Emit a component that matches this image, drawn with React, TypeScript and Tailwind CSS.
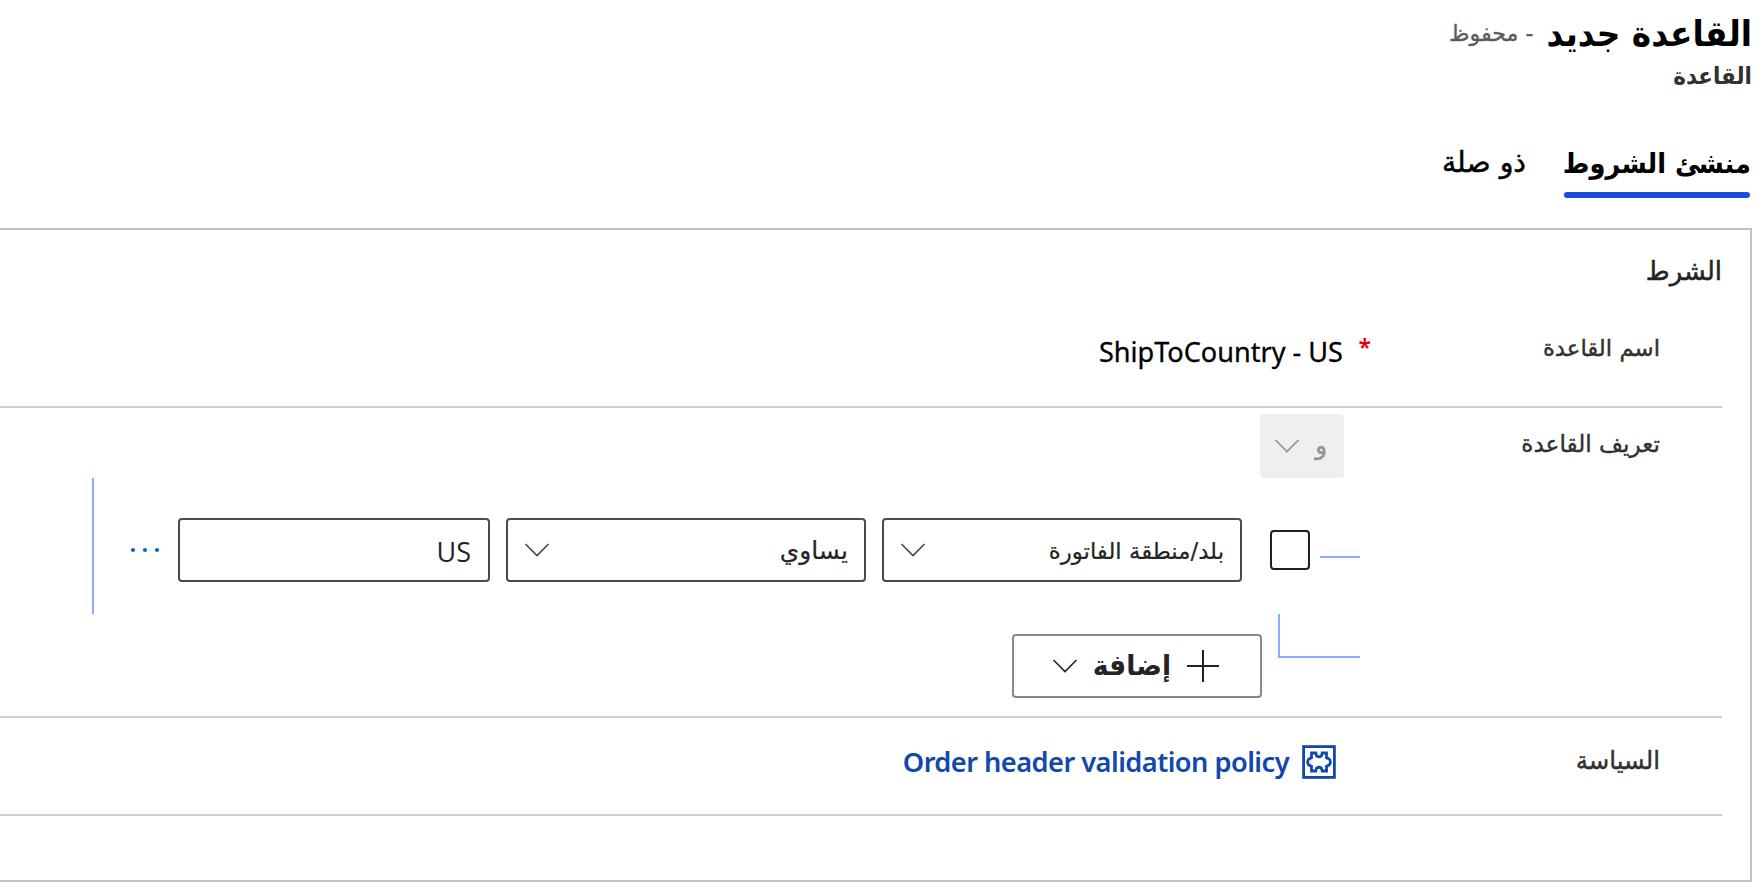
import type { ReactNode } from "react";

function Chevron({ className }: { className: string }) {
  return (
    <svg width="26" height="16" viewBox="0 0 26 16" fill="none" stroke="currentColor" className={className}>
      <path d="M1.5 2 L13 13.5 L24.5 2" strokeWidth="1.6" />
    </svg>
  );
}

function PuzzleIcon() {
  return (
    <svg width="34" height="34" viewBox="0 0 34 34" fill="none" stroke="#1148ab">
      <rect x="1.6" y="1.6" width="30.8" height="30.8" strokeWidth="2.8" />
      <path
        d="M9.5 8 H13.8 L14.6 10.8 Q17 12.6 19.4 10.8 L20.2 8 H24.5 V12.8 L26.6 13.6 Q28.4 14.6 28.4 17 Q28.4 19.4 26.6 20.4 L24.5 21.2 V26 H20.2 L19.4 23.2 Q17 21.4 14.6 23.2 L13.8 26 H9.5 V21.2 L7.4 20.4 Q5.6 19.4 5.6 17 Q5.6 14.6 7.4 13.6 L9.5 12.8 Z"
        strokeWidth="2.8"
      />
    </svg>
  );
}

function Select({ children }: { children: ReactNode }) {
  return (
    <button className="flex h-16 w-[360px] items-center justify-between rounded border-2 border-[#4f4a47] pt-[2px] pr-[16px] pl-[16px] text-[#242424]">
      {children}
      <Chevron className="-mt-[2px] text-[#4a4644]" />
    </button>
  );
}

export default function App() {
  return (
    <div
      dir="rtl"
      className="h-[892px] w-[1764px] overflow-hidden bg-white font-['DejaVu_Sans','Noto_Sans',sans-serif] whitespace-nowrap text-[#323130]"
    >
      <header className="pr-[14px]">
        <div className="flex h-[69px] items-center">
          <h1 className="-mr-[2px] scale-y-[1.08] text-[32.8px] leading-[69px] font-bold text-black">القاعدة جديد</h1>
          <span className="mr-[13px] -mt-[3px] text-[22.2px] leading-[60px] text-[#5c5b5a] [-webkit-text-stroke:0.3px]">- محفوظ</span>
        </div>
        <div className="-mr-[2px] -translate-y-[2px] scale-y-[1.1] text-[21.5px] leading-[17px] font-bold">القاعدة</div>
        <nav className="mt-12 flex text-black">
          <div className="w-[186px]">
            <div className="-mr-[1px] scale-y-[1.08] text-[25.7px] leading-[58px] font-bold">منشئ الشروط</div>
            <div className="h-[6px] rounded-[3px] bg-[#1b4bdb]" />
          </div>
          <div className="mr-[38px] text-[28.4px] leading-[58px] [-webkit-text-stroke:0.5px]">ذو صلة</div>
        </nav>
      </header>

      <section className="mt-[30px] mr-3 h-[654px] border-2 border-l-0 border-[#c2c2c2] pr-7">
        <h2 className="h-[82px] text-[25.8px] leading-[82px] text-[#242424] [-webkit-text-stroke:0.5px]">الشرط</h2>

        <div className="flex h-24 border-b-2 border-[#cfcfcf]">
          <div className="w-[352px] pr-[62px] text-[22.8px] leading-[72px] [-webkit-text-stroke:0.4px]">اسم القاعدة</div>
          <div className="-mr-px w-[28px] pt-[20px] font-['Noto_Sans',sans-serif] text-[23px] leading-[30px] font-semibold text-[#e60000]">*</div>
          <div dir="ltr" className="font-['Noto_Sans',sans-serif] text-[27.1px] leading-[80px] text-black [-webkit-text-stroke:0.3px]">
            ShipToCountry - US
          </div>
        </div>

        <div className="flex h-[310px] border-b-2 border-[#cfcfcf]">
          <div className="w-[352px] pr-[62px] text-[23.2px] leading-[72px] [-webkit-text-stroke:0.4px]">تعريف القاعدة</div>
          <div className="flex flex-1 flex-col pt-[6px] pr-[10px] pl-[92px]">
            <button className="mr-4 flex h-16 w-[84px] items-center justify-between rounded bg-[#f0efed] pr-[17px] pl-[14px] text-[24.4px] text-[#93918f] [-webkit-text-stroke:0.4px]">
              و
              <Chevron className="" />
            </button>
            <div className="flex h-[136px] items-center border-l-2 border-[#8aaaff]">
              <div className="mt-[22px] h-[2px] w-10 bg-[#8aaaff]" />
              <div className="mt-2 flex items-center">
                <div className="mr-[10px] h-10 w-10 rounded border-2 border-[#201f1e]" />
                <div className="mr-7 flex items-center gap-4">
                  <Select>
                    <span className="text-[22.8px] [-webkit-text-stroke:0.2px]">بلد/منطقة الفاتورة</span>
                  </Select>
                  <Select>
                    <span className="text-[24.9px] [-webkit-text-stroke:0.2px]">يساوي</span>
                  </Select>
                  <div className="flex h-16 w-[312px] items-center rounded border-2 border-[#4f4a47] pt-[4px] pr-[17px] font-['Open_Sans',sans-serif] text-[27px] text-[#242424]">
                    US
                  </div>
                </div>
                <svg width="30" height="6" viewBox="0 0 30 6" fill="#0b63ce" className="mr-[18px]">
                  <circle cx="3" cy="3" r="2.1" />
                  <circle cx="15" cy="3" r="2.1" />
                  <circle cx="27" cy="3" r="2.1" />
                </svg>
              </div>
            </div>
            <div className="flex">
              <div className="h-11 w-[82px] border-b-2 border-l-2 border-[#8aaaff]" />
              <button className="mt-5 mr-4 flex h-16 w-[250px] items-center rounded border-2 border-[#8a8886] pr-[41px] text-[#242424]">
                <svg width="32" height="32" viewBox="0 0 32 32" stroke="currentColor" strokeWidth="2">
                  <path d="M16 0V32M0 16H32" />
                </svg>
                <span className="mr-[16px] -translate-y-px scale-y-[1.06] text-[26.6px] leading-[60px] font-bold">إضافة</span>
                <Chevron className="mr-[15px]" />
              </button>
            </div>
          </div>
        </div>

        <div className="flex h-[98px] border-b-2 border-[#cfcfcf]">
          <div className="w-[352px] pr-[62px] text-[24.4px] leading-[85px] [-webkit-text-stroke:0.4px]">السياسة</div>
          <a className="mr-[34px] flex h-[88px] items-center text-[#1148ab]">
            <PuzzleIcon />
            <span dir="ltr" className="-mt-px mr-[13px] font-['Noto_Sans',sans-serif] text-[27.2px] leading-[60px] font-semibold tracking-[-0.53px]">
              Order header validation policy
            </span>
          </a>
        </div>
      </section>
    </div>
  );
}
